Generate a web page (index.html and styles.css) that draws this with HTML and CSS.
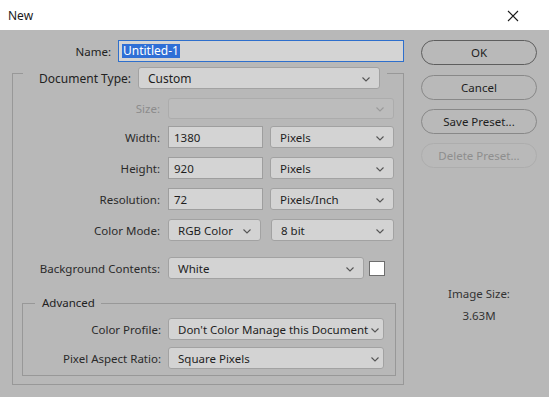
FILE: index.html
```html
<!DOCTYPE html>
<html>
<head>
<meta charset="utf-8">
<link rel="stylesheet" href="styles.css">
</head>
<body>
<div class="window">
  <div class="titlebar">
    <span class="title">New</span>
    <svg class="close" width="12" height="12" viewBox="0 0 12 12"><path d="M1 1 L11 11 M11 1 L1 11" stroke="#1a1a1a" stroke-width="1.1" fill="none"/></svg>
  </div>
  <div class="dialog">
    <div class="form">
      <div class="name-row">
        <span class="name-label">Name:</span>
        <div class="name-input"><span class="sel">Untitled-1</span></div>
      </div>
      <div class="group">
        <div class="legend-row">
          <span class="legend-label">Document Type:</span>
          <div class="select w-doc">Custom<svg class="chev" width="8" height="5" viewBox="0 0 8 5"><path d="M0.5 0.5 L4 4 L7.5 0.5" stroke="#555" stroke-width="1.1" fill="none"/></svg></div>
        </div>

        <div class="row row-size">
          <span class="lbl disabled">Size:</span>
          <div class="select disabled-select w-size"><svg class="chev" width="8" height="5" viewBox="0 0 8 5"><path d="M0.5 0.5 L4 4 L7.5 0.5" stroke="#9a9a9a" stroke-width="1.1" fill="none"/></svg></div>
        </div>
        <div class="row row-first">
          <span class="lbl">Width:</span>
          <div class="input w-num">1380</div>
          <div class="select w-unit">Pixels<svg class="chev" width="8" height="5" viewBox="0 0 8 5"><path d="M0.5 0.5 L4 4 L7.5 0.5" stroke="#555" stroke-width="1.1" fill="none"/></svg></div>
        </div>
        <div class="row">
          <span class="lbl">Height:</span>
          <div class="input w-num">920</div>
          <div class="select w-unit">Pixels<svg class="chev" width="8" height="5" viewBox="0 0 8 5"><path d="M0.5 0.5 L4 4 L7.5 0.5" stroke="#555" stroke-width="1.1" fill="none"/></svg></div>
        </div>
        <div class="row">
          <span class="lbl">Resolution:</span>
          <div class="input w-num">72</div>
          <div class="select w-unit">Pixels/Inch<svg class="chev" width="8" height="5" viewBox="0 0 8 5"><path d="M0.5 0.5 L4 4 L7.5 0.5" stroke="#555" stroke-width="1.1" fill="none"/></svg></div>
        </div>
        <div class="row">
          <span class="lbl">Color Mode:</span>
          <div class="select w-mode">RGB Color<svg class="chev" width="8" height="5" viewBox="0 0 8 5"><path d="M0.5 0.5 L4 4 L7.5 0.5" stroke="#555" stroke-width="1.1" fill="none"/></svg></div>
          <div class="select w-bit">8 bit<svg class="chev" width="8" height="5" viewBox="0 0 8 5"><path d="M0.5 0.5 L4 4 L7.5 0.5" stroke="#555" stroke-width="1.1" fill="none"/></svg></div>
        </div>
        <div class="row row-bg">
          <span class="lbl">Background Contents:</span>
          <div class="select w-bg">White<svg class="chev" width="8" height="5" viewBox="0 0 8 5"><path d="M0.5 0.5 L4 4 L7.5 0.5" stroke="#555" stroke-width="1.1" fill="none"/></svg></div>
          <div class="swatch"></div>
        </div>

        <div class="advanced">
          <div class="adv-legend">Advanced</div>
          <div class="row adv-row">
            <span class="lbl adv-lbl">Color Profile:</span>
            <div class="select w-adv">Don't Color Manage this Document<svg class="chev" width="8" height="5" viewBox="0 0 8 5"><path d="M0.5 0.5 L4 4 L7.5 0.5" stroke="#555" stroke-width="1.1" fill="none"/></svg></div>
          </div>
          <div class="row adv-row">
            <span class="lbl adv-lbl">Pixel Aspect Ratio:</span>
            <div class="select w-adv">Square Pixels<svg class="chev" width="8" height="5" viewBox="0 0 8 5"><path d="M0.5 0.5 L4 4 L7.5 0.5" stroke="#555" stroke-width="1.1" fill="none"/></svg></div>
          </div>
        </div>
      </div>
    </div>

    <div class="side">
      <div class="buttons">
        <div class="btn btn-default">OK</div>
        <div class="btn">Cancel</div>
        <div class="btn">Save Preset...</div>
        <div class="btn btn-disabled">Delete Preset...</div>
      </div>
      <div class="image-size">
        <div class="is-label">Image Size:</div>
        <div class="is-value">3.63M</div>
      </div>
    </div>
  </div>
</div>
</body>
</html>
```

FILE: styles.css
```css
* { box-sizing: border-box; }
html, body { margin: 0; padding: 0; }
body {
  width: 549px;
  height: 397px;
  overflow: hidden;
  font-family: "Noto Sans", "DejaVu Sans", sans-serif;
  font-size: 11.5px;
  color: #222;
  background: #b8b8b8;
}
.window { width: 549px; height: 397px; display: flex; flex-direction: column; }
.titlebar {
  height: 30px;
  background: #fff;
  display: flex;
  align-items: center;
  justify-content: space-between;
  padding: 0 30px 0 8px;
  flex: none;
}
.title { font-size: 12px; color: #1a1a1a; }
.close { display: block; margin-top: 1px; }

.dialog {
  flex: 1;
  display: flex;
  background: #b8b8b8;
  border-radius: 0 0 7px 7px;
}
.form { width: 404px; padding-left: 12px; padding-top: 10px; }

.name-row { display: flex; align-items: center; height: 22px; }
.name-label { width: 99px; text-align: right; margin-right: 7px; }
.name-input {
  width: 286px;
  height: 22px;
  border: 1px solid #2e6fcc;
  background: #d4d4d4;
  padding-left: 3px;
  display: flex;
  align-items: center;
}
.sel { background: #2f6fd6; color: #fff; line-height: 14px; padding: 0 1px; font-size: 12px; }

.group {
  margin-top: 11px;
  width: 392px;
  height: 312px;
  border: 1px solid #989898;
}
.legend-row {
  margin-top: -7px;
  margin-left: 10px;
  width: 364px;
  height: 22px;
  display: flex;
  align-items: center;
  background: #b8b8b8;
}
.legend-label { width: 108px; text-align: right; margin-right: 7px; font-size: 12px; }
.w-doc { width: 242px; font-size: 12px; }

.select {
  height: 22px;
  border: 1px solid #a2a2a2;
  border-radius: 3px;
  background: #d3d3d3;
  display: flex;
  align-items: center;
  justify-content: space-between;
  padding: 0 9px 0 9px;
  white-space: nowrap;
  color: #1e1e1e;
}
.chev { display: block; flex: none; margin-top: 2px; }
.disabled-select { background: #bcbcbc; border-color: #acacac; justify-content: flex-end; }
.input {
  height: 22px;
  border: 1px solid #9e9e9e;
  background: #d4d4d4;
  display: flex;
  align-items: center;
  padding-left: 5px;
  color: #1e1e1e;
}

.row { display: flex; align-items: center; height: 22px; margin-top: 9px; }
.row-size { margin-top: 9px; height: 21px; }
.row-size .select { height: 21px; }
.row-first { margin-top: 7px; }
.lbl { width: 147px; text-align: right; margin-right: 8px; flex: none; color: #2a2a2a; }
.lbl.disabled { color: #8c8c8c; }

.w-size { width: 226px; }
.w-num { width: 95px; margin-right: 7px; }
.w-unit { width: 124px; }
.w-mode { width: 93px; margin-right: 10px; }
.w-bit { width: 123px; }
.row-bg { margin-top: 16px; }
.w-bg { width: 196px; margin-right: 5px; }
.swatch { width: 16px; height: 15px; background: #fff; border: 1px solid #6e6e6e; }

.advanced {
  margin: 24px 0 0 9px;
  width: 374px;
  height: 73px;
  border: 1px solid #989898;
}
.adv-legend {
  display: block;
  width: max-content;
  margin-top: -9px;
  margin-left: 12px;
  padding: 0 6px 0 7px;
  background: #b8b8b8;
  height: 16px;
  line-height: 16px;
}
.adv-row { margin-top: 7px; }
.adv-lbl { width: 138px; margin-right: 7px; }
.w-adv { width: 216px; padding-right: 4px; }

.side { width: 116px; margin-left: 17px; padding-top: 10px; display: flex; flex-direction: column; }
.buttons { display: flex; flex-direction: column; gap: 9px; }
.btn {
  height: 25px;
  border: 1px solid #888;
  border-radius: 13px;
  display: flex;
  align-items: center;
  justify-content: center;
  color: #1e1e1e;
  background: #b9b9b9;
}
.btn-default { border-color: #5e5e5e; margin-bottom: 1px; }
.btn-disabled { border-color: #adadad; color: #8e8e8e; }

.image-size { margin-top: 118px; text-align: center; color: #333; }
.is-value { margin-top: 7px; }
```
